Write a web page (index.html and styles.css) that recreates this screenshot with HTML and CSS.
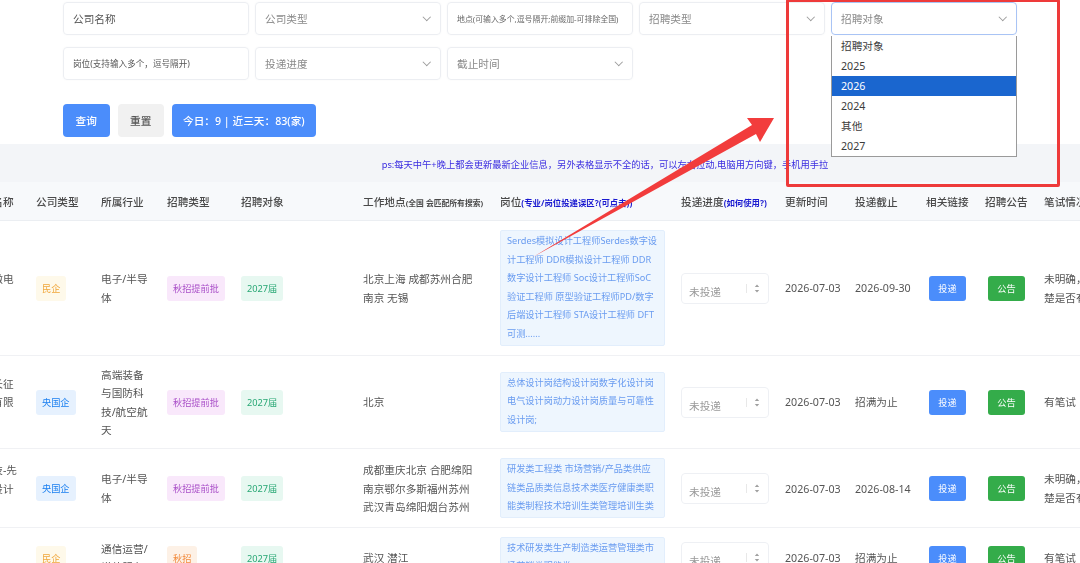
FILE: index.html
```html
<!DOCTYPE html>
<html lang="en">
<head>
  <meta charset="UTF-8" />
  <meta name="viewport" content="width=device-width, initial-scale=1.0"/>
  <title>校招信息汇总</title>
  <link rel="stylesheet" href="styles.css">
</head>
<body>
  <div class="page">
    <div class="filters">
      <div class="filter-grid">
        <div class="field dark">公司名称</div>
        <div class="field arrow">公司类型</div>
        <div class="field tiny">地点(可输入多个,逗号隔开;前缀加-可排除全国)</div>
        <div class="field arrow">招聘类型</div>
        <div class="field arrow focus">招聘对象
          <ul class="menu">
            <li>招聘对象</li>
            <li>2025</li>
            <li class="selected">2026</li>
            <li>2024</li>
            <li>其他</li>
            <li>2027</li>
          </ul>
        </div>
        <div class="field dark small">岗位(支持输入多个，逗号隔开)</div>
        <div class="field arrow">投递进度</div>
        <div class="field arrow">截止时间</div>
      </div>
      <div class="actions">
        <button class="btn primary">查询</button>
        <button class="btn plain">重置</button>
        <button class="btn primary count">今日：9 | 近三天：83(家)</button>
      </div>
    </div>

    <div class="notice">ps:每天中午+晚上都会更新最新企业信息，另外表格显示不全的话，可以左右拉动,电脑用方向键，手机用手拉</div>

    <div class="table-wrap">
      <table class="jobs">
        <colgroup>
          <col class="c-name"><col class="c-type"><col class="c-industry"><col class="c-kind"><col class="c-target">
          <col class="c-place"><col class="c-post"><col class="c-progress"><col class="c-update"><col class="c-end">
          <col class="c-link"><col class="c-notice"><col class="c-exam">
        </colgroup>
        <thead>
          <tr>
            <th>公司名称</th>
            <th>公司类型</th>
            <th>所属行业</th>
            <th>招聘类型</th>
            <th>招聘对象</th>
            <th>工作地点<span class="hint-dark">(全国 会匹配所有搜索)</span></th>
            <th>岗位<span class="hint">(专业/岗位投递误区?(可点击))</span></th>
            <th>投递进度<span class="hint">(如何使用?)</span></th>
            <th>更新时间</th>
            <th>投递截止</th>
            <th>相关链接</th>
            <th>招聘公告</th>
            <th>笔试情况</th>
          </tr>
        </thead>
        <tbody>
          <tr>
            <td>南京集成芯微电<br>子有限公司</td>
            <td><span class="tag orange">民企</span></td>
            <td>电子/半导体</td>
            <td><span class="tag purple">秋招提前批</span></td>
            <td><span class="tag green">2027届</span></td>
            <td class="place">北京上海 成都苏州合肥南京 无锡</td>
            <td><div class="posts">Serdes模拟设计工程师Serdes数字设<br>计工程师 DDR模拟设计工程师 DDR<br>数字设计工程师 Soc设计工程师SoC<br>验证工程师 原型验证工程师PD/数字<br>后端设计工程师 STA设计工程师 DFT<br>可测......</div></td>
            <td><div class="status">未投递<svg class="updown" width="6" height="9" viewBox="0 0 6 9"><path d="M3 0.5 5.2 3H.8zM3 8.5 .8 6h4.4z"/></svg></div></td>
            <td class="date">2026-07-03</td>
            <td class="date">2026-09-30</td>
            <td><a class="mini blue">投递</a></td>
            <td><a class="mini grn">公告</a></td>
            <td>未明确，招聘未清<br>楚是否有笔试</td>
          </tr>
          <tr>
            <td>中国航天三长征<br>火箭技术部有限<br>公司</td>
            <td><span class="tag blue-tag">央国企</span></td>
            <td>高端装备与国防科技/航空航天</td>
            <td><span class="tag purple">秋招提前批</span></td>
            <td><span class="tag green">2027届</span></td>
            <td class="place">北京</td>
            <td><div class="posts">总体设计岗结构设计岗数字化设计岗<br>电气设计岗动力设计岗质量与可靠性<br>设计岗;</div></td>
            <td><div class="status">未投递<svg class="updown" width="6" height="9" viewBox="0 0 6 9"><path d="M3 0.5 5.2 3H.8zM3 8.5 .8 6h4.4z"/></svg></div></td>
            <td class="date">2026-07-03</td>
            <td class="date">招满为止</td>
            <td><a class="mini blue">投递</a></td>
            <td><a class="mini grn">公告</a></td>
            <td>有笔试</td>
          </tr>
          <tr>
            <td>中国电子科技-先<br>进集成电路设计<br>公司</td>
            <td><span class="tag blue-tag">央国企</span></td>
            <td>电子/半导体</td>
            <td><span class="tag purple">秋招提前批</span></td>
            <td><span class="tag green">2027届</span></td>
            <td class="place">成都重庆北京 合肥绵阳南京鄂尔多斯福州苏州武汉青岛绵阳烟台苏州</td>
            <td><div class="posts">研发类工程类 市场营销/产品类供应<br>链类品质类信息技术类医疗健康类职<br>能类制程技术培训生类管理培训生类</div></td>
            <td><div class="status">未投递<svg class="updown" width="6" height="9" viewBox="0 0 6 9"><path d="M3 0.5 5.2 3H.8zM3 8.5 .8 6h4.4z"/></svg></div></td>
            <td class="date">2026-07-03</td>
            <td class="date">2026-08-14</td>
            <td><a class="mini blue">投递</a></td>
            <td><a class="mini grn">公告</a></td>
            <td>未明确，招聘未清<br>楚是否有笔试</td>
          </tr>
          <tr>
            <td>华中通信<br>有限公司</td>
            <td><span class="tag orange">民企</span></td>
            <td>通信运营/增值服务</td>
            <td><span class="tag peach">秋招</span></td>
            <td><span class="tag green">2027届</span></td>
            <td class="place">武汉 潜江</td>
            <td><div class="posts">技术研发类生产制造类运营管理类市<br>场营销类职能类</div></td>
            <td><div class="status">未投递<svg class="updown" width="6" height="9" viewBox="0 0 6 9"><path d="M3 0.5 5.2 3H.8zM3 8.5 .8 6h4.4z"/></svg></div></td>
            <td class="date">2026-07-03</td>
            <td class="date">招满为止</td>
            <td><a class="mini blue">投递</a></td>
            <td><a class="mini grn">公告</a></td>
            <td>有笔试</td>
          </tr>
        </tbody>
      </table>
    </div>

    <!-- red annotation drawn on top of the screenshot -->
    <div class="mark-box"></div>
    <svg class="mark-arrow" width="1080" height="563" viewBox="0 0 1080 563">
      <polygon points="774,118 747,118 752,125 533,257 756,134 760,142" fill="#f23c3c"/>
    </svg>
  </div>
</body>
</html>
```

FILE: styles.css
```css
html, body {
  margin: 0;
  padding: 0;
  height: 100%;
  overflow: hidden;
  background-color: #fff;
}
body {
  font-family: "Noto Sans", "Noto Sans CJK SC", sans-serif;
  font-size: 10.67px;
  color: #555;
}
.page {
  position: relative;
  width: 1080px;
  height: 563px;
  overflow: hidden;
  filter: blur(0.3px);
}

/* filter form */
.filters {
  padding: 2px 0 7px 63px;
}
.filter-grid {
  display: grid;
  grid-template-columns: repeat(5, 186px);
  gap: 12px 6px;
}
.field {
  position: relative;
  box-sizing: border-box;
  height: 33px;
  line-height: 33px;
  padding: 0 9px;
  border: 1px solid #eceef2;
  border-radius: 4px;
  box-shadow: 0 0 2px rgba(0,0,0,0.04);
  color: #8a8a8a;
  white-space: nowrap;
}
.field.dark {
  color: #555;
}
.field.small {
  font-size: 8.6px;
}
.field.tiny {
  font-size: 7.9px;
  color: #666;
}
.field.focus {
  border-color: #a9c4f5;
}
.field.arrow::after {
  content: "";
  position: absolute;
  right: 11px;
  top: 11px;
  width: 4.5px;
  height: 4.5px;
  border-right: 1px solid #999;
  border-bottom: 1px solid #999;
  transform: rotate(45deg);
}
.menu {
  position: absolute;
  left: -1px;
  right: -1px;
  top: 33px;
  margin: 0;
  padding: 0;
  list-style: none;
  background-color: #fff;
  border: 1px solid #9a9a9a;
  border-top: none;
  color: #3c3c3c;
  z-index: 5;
}
.menu li {
  height: 20px;
  line-height: 20px;
  padding-left: 9px;
}
.menu li.selected {
  background-color: #1a66cf;
  color: #fff;
}
.actions {
  display: flex;
  gap: 8px;
  margin-top: 24px;
}
.btn {
  height: 33px;
  padding: 0 12.6px;
  border: none;
  border-radius: 4px;
  font-family: inherit;
  font-size: 10.67px;
  font-weight: 500;
}
.btn.primary {
  background-color: #4b8dfb;
  color: #fff;
}
.btn.plain {
  background-color: #f1f1f1;
  color: #555;
}
.btn.count {
  padding: 0 11px;
}

/* blue note */
.notice {
  height: 38px;
  line-height: 42px;
  padding-left: 130px;
  background-color: #f3f5f8;
  color: #3a2ce0;
  font-size: 9.28px;
  text-align: center;
  white-space: nowrap;
}

/* table, scrolled sideways like the original */
.table-wrap {
  overflow: hidden;
}
.jobs {
  table-layout: fixed;
  width: 1228px;
  margin-left: -72px;
  border-collapse: collapse;
}
.c-name { width: 100px; }
.c-type { width: 65px; }
.c-industry { width: 66px; }
.c-kind { width: 74px; }
.c-target { width: 122px; }
.c-place { width: 137px; }
.c-post { width: 181px; }
.c-progress { width: 104px; }
.c-update { width: 70px; }
.c-end { width: 71px; }
.c-link { width: 59px; }
.c-notice { width: 59px; }
.c-exam { width: 120px; }
.jobs th {
  height: 38px;
  padding: 0 8px;
  background-color: #f7f9fb;
  border-bottom: 1px solid #ebeef2;
  text-align: left;
  font-weight: 500;
  color: #4a4a4a;
  white-space: nowrap;
}
.jobs td:first-child {
  padding-left: 11px;
  padding-right: 0;
}
.jobs th:first-child {
  padding-left: 43px;
  padding-right: 0;
}
.hint {
  color: #1a1ad0;
  font-size: 8.4px;
  font-weight: 700;
}
.hint-dark {
  font-size: 7.8px;
  font-weight: 700;
}
.jobs td {
  padding: 10px 8px 8px;
  border-bottom: 1px solid #f0f1f4;
  line-height: 18.6px;
  vertical-align: middle;
  word-break: break-all;
}
.jobs td.place {
  padding-right: 17px;
}
.jobs td.date {
  white-space: nowrap;
}
.tag {
  display: inline-block;
  height: 25px;
  line-height: 25px;
  padding: 0 6px;
  border-radius: 3px;
  font-size: 9.2px;
  white-space: nowrap;
  vertical-align: middle;
}
.orange { background-color: #fef9ea; color: #f0a63a; }
.blue-tag { background-color: #e6f1fe; color: #1a7ff0; }
.purple { background-color: #f9e8fb; color: #a94fc8; }
.green { background-color: #e7f8f1; color: #2aa876; }
.peach { background-color: #fdf1e6; color: #f28a3c; }
.posts {
  margin: -1px 0 1px;
  padding: 1px 6px;
  background-color: #eef6fe;
  border: 1px solid #e2eefc;
  border-radius: 2px;
  color: #6a9cf0;
  font-size: 9.2px;
  white-space: nowrap;
}
.status {
  position: relative;
  box-sizing: border-box;
  width: 88px;
  height: 31px;
  margin-top: -1px;
  line-height: 36px;
  padding-left: 7px;
  border: 1px solid #eef0f4;
  border-radius: 4px;
  color: #999;
}
.status::before {
  content: "";
  position: absolute;
  left: 64px;
  top: 10px;
  height: 9px;
  border-left: 1px solid #e8e8e8;
}
.updown {
  position: absolute;
  left: 72px;
  top: 10px;
  fill: #a0a0a0;
}
.mini {
  display: block;
  width: 37px;
  height: 25px;
  margin: 0 auto;
  line-height: 25px;
  border-radius: 3px;
  text-align: center;
  color: #fff;
  font-size: 9.2px;
}
.mini.blue { background-color: #4b8dfb; }
.mini.grn { background-color: #34ac4a; }

/* annotation */
.mark-box {
  position: absolute;
  left: 786px;
  top: -1px;
  width: 268px;
  height: 182px;
  border: 3px solid #ee3a3a;
  border-radius: 2px;
  z-index: 6;
}
.mark-arrow {
  position: absolute;
  left: 0;
  top: 0;
  z-index: 6;
}
```
